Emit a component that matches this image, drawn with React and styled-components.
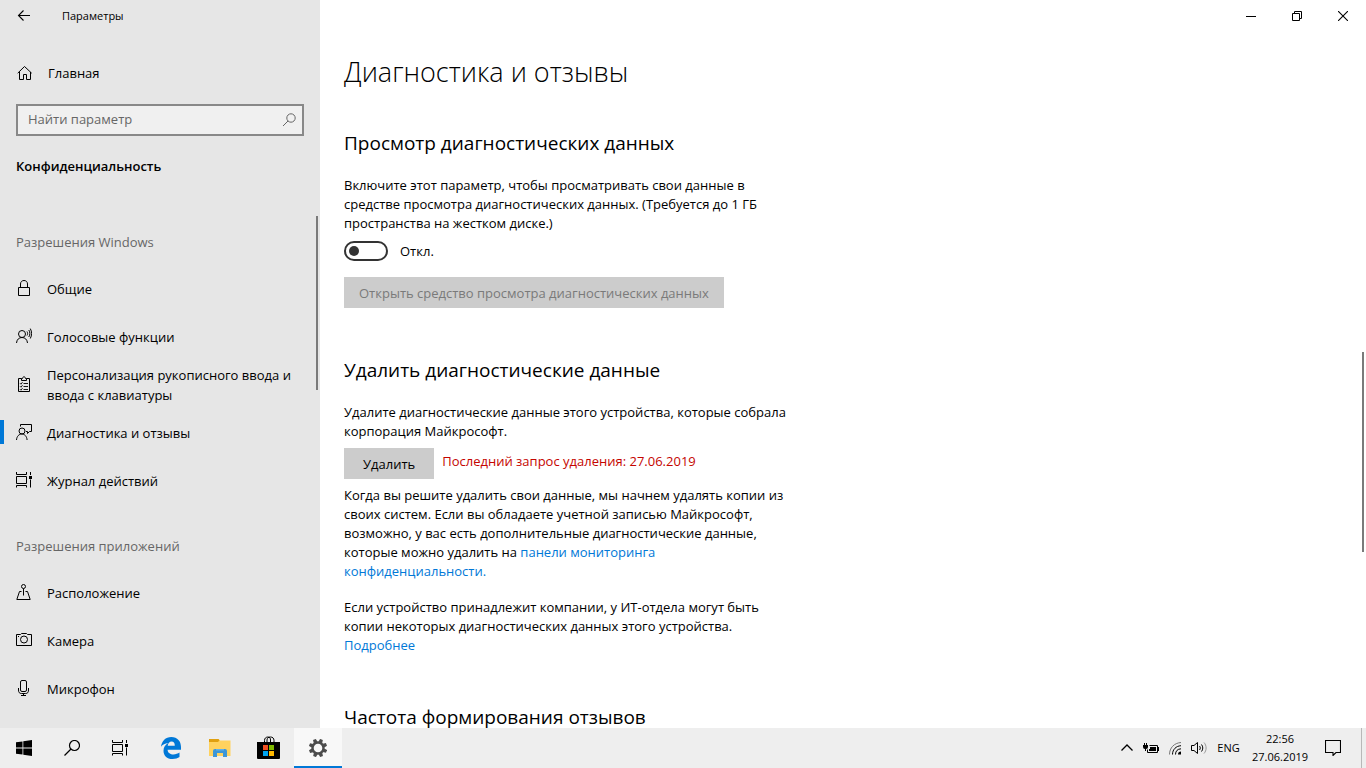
import React, { useState } from "react";
import styled, { createGlobalStyle } from "styled-components";

const GlobalStyle = createGlobalStyle`
  * {
    box-sizing: border-box;
  }
  body {
    margin: 0;
    background: #fff;
    color: #000;
    font-family: "Open Sans", "Noto Sans", sans-serif;
    font-size: 13px;
    line-height: 20px;
  }
  button, input {
    font: inherit;
    color: inherit;
  }
  svg {
    display: block;
    flex: none;
  }
`;

const Desktop = styled.div`
  display: flex;
  flex-direction: column;
  height: 100vh;
  overflow: hidden;
`;

const Window = styled.div`
  display: flex;
  flex: 1;
  min-height: 0;
`;

/* sidebar */

const Sidebar = styled.aside`
  position: relative;
  display: flex;
  flex-direction: column;
  flex: none;
  width: 320px;
  background: #e6e6e6;
  overflow: hidden;
`;

const TitleBar = styled.header`
  display: flex;
  align-items: center;
  flex: none;
  height: 32px;
  font-size: 11px;
`;

const BackButton = styled.button`
  display: flex;
  align-items: center;
  justify-content: center;
  width: 48px;
  height: 32px;
  margin-right: 14px;
  padding: 0;
  border: 0;
  background: none;
`;

const HomeLink = styled.a`
  display: flex;
  align-items: center;
  flex: none;
  gap: 16px;
  height: 48px;
  margin-top: 17px;
  padding: 0 16px;
  color: inherit;
  text-decoration: none;
`;

const SearchBox = styled.label`
  display: flex;
  align-items: center;
  flex: none;
  height: 32px;
  margin: 7px 16px 0;
  padding: 0 5px 0 10px;
  border: 2px solid #888;
  background: #f0f0f0;
  color: #666;
`;

const SearchInput = styled.input`
  flex: 1;
  min-width: 0;
  padding: 0 0 2px;
  border: 0;
  outline: 0;
  background: none;
  &::placeholder {
    color: #666;
    opacity: 1;
  }
`;

const Category = styled.h2`
  flex: none;
  margin: 20px 16px 0;
  font-size: 13px;
  font-weight: 600;
  line-height: 20px;
`;

const Nav = styled.nav`
  flex: 1;
  min-height: 0;
  margin-top: 25px;
  overflow: hidden;
`;

const GroupTitle = styled.h3`
  height: 64px;
  margin: 0;
  padding: 31px 16px 0;
  color: #666;
  font-size: 13px;
  font-weight: 400;
`;

const NavItem = styled.a`
  display: flex;
  align-items: center;
  gap: 15px;
  height: 48px;
  padding-right: 8px;
  color: inherit;
  text-decoration: none;
  &::before {
    content: "";
    flex: none;
    width: 4px;
    height: 24px;
    margin: 0 -3px 2px 0;
    background: ${(props) => (props.$active ? "#0078d7" : "transparent")};
  }
  svg {
    margin-bottom: 2px;
  }
`;

const ScrollThumb = styled.div`
  position: absolute;
  top: ${(props) => props.$top}px;
  right: 2px;
  width: 2px;
  height: ${(props) => props.$size}px;
  background: #7a7a7a;
`;

/* content */

const Content = styled.main`
  position: relative;
  flex: 1;
  min-width: 0;
  overflow: hidden;
`;

const WindowControls = styled.div`
  display: flex;
  justify-content: flex-end;
`;

const ControlButton = styled.button`
  display: flex;
  align-items: center;
  justify-content: center;
  width: 46px;
  height: 32px;
  padding: 0;
  border: 0;
  background: none;
`;

const Page = styled.div`
  max-width: 500px;
  padding: 20px 24px 0;
`;

const PageTitle = styled.h1`
  margin: 0;
  font-size: 27px;
  font-weight: 300;
  line-height: 40px;
  white-space: nowrap;
`;

const Section = styled.section`
  margin-top: ${(props) => props.$gap}px;
`;

const SectionTitle = styled.h2`
  margin: 0 0 19px;
  font-size: 19px;
  font-weight: 400;
  line-height: 28px;
  white-space: nowrap;
`;

const Text = styled.p`
  margin: 0 0 ${(props) => props.$after || 0}px;
  line-height: 19px;
`;

const TextLink = styled.a`
  color: #0078d7;
  text-decoration: none;
`;

const ToggleRow = styled.label`
  display: flex;
  align-items: center;
  gap: 12px;
  width: max-content;
`;

const Toggle = styled.input`
  appearance: none;
  display: flex;
  align-items: center;
  width: 44px;
  height: 20px;
  margin: 0;
  padding: 0 3px;
  border: 2px solid #333;
  border-radius: 10px;
  &::before {
    content: "";
    width: 10px;
    height: 10px;
    border-radius: 5px;
    background: #333;
  }
  &:checked {
    justify-content: flex-end;
    border-color: #0078d7;
    background: #0078d7;
  }
  &:checked::before {
    background: #fff;
  }
`;

const Button = styled.button`
  height: 31px;
  padding: 0 ${(props) => props.$pad || 15}px;
  border: 0;
  background: #ccc;
  white-space: nowrap;
  &:disabled {
    color: #7a7a7a;
  }
`;

const ViewerButton = styled(Button)`
  margin-top: 16px;
`;

const ActionRow = styled.div`
  display: flex;
  gap: 8px;
  margin-bottom: 7px;
`;

const Warning = styled.span`
  padding-top: 3px;
  color: #c50500;
  white-space: nowrap;
`;

/* taskbar */

const Taskbar = styled.footer`
  display: flex;
  align-items: stretch;
  flex: none;
  height: 40px;
  background: #eee;
`;

const TaskButton = styled.button`
  display: flex;
  align-items: center;
  justify-content: center;
  width: 48px;
  padding: 0;
  border: 0;
  background: ${(props) => (props.$active ? "#f8f8f8" : "none")};
  box-shadow: ${(props) => (props.$active ? "inset 0 -2px #0078d7" : "none")};
`;

const PinnedApps = styled.div`
  display: flex;
  gap: 1px;
  margin-left: 3px;
`;

const Tray = styled.div`
  display: flex;
  align-items: stretch;
  margin-left: auto;
  font-size: 11px;
`;

const TrayButton = styled.button`
  display: flex;
  align-items: center;
  justify-content: center;
  width: ${(props) => props.$width || 24}px;
  padding: 0;
  border: 0;
  background: none;
`;

const Clock = styled.button`
  width: 68px;
  padding: 0;
  border: 0;
  background: none;
  line-height: 18px;
  text-align: center;
`;

const ShowDesktop = styled.button`
  width: 5px;
  margin-left: 9px;
  padding: 0;
  border: 0;
  border-left: 1px solid #b8b8b8;
  background: none;
`;

/* icons */

const Icon = ({ size = 16, width, height, children }) => (
  <svg
    width={width || size}
    height={height || size}
    viewBox={`0 0 ${width || size} ${height || size}`}
    fill="none"
    stroke="currentColor"
    aria-hidden="true"
  >
    {children}
  </svg>
);

const BackIcon = () => (
  <Icon>
    <path d="M2.5 7.5H14M7.5 2.5L2.5 7.5L7.5 12.5" strokeWidth="1.1" />
  </Icon>
);

const HomeIcon = () => (
  <Icon>
    <path d="M1.7 8.2L8.5 1.500L15.700 8.200M3.500 7V14.500H7.500V9.500H10.500V14.500H14.500V7" />
  </Icon>
);

const SearchIcon = () => (
  <Icon>
    <circle cx="10" cy="6" r="4.2" />
    <path d="M7 9L2 14" />
  </Icon>
);

const LockIcon = () => (
  <Icon>
    <path d="M2.5 7.5H13.5V15.5H2.5ZM4.5 7.5V4C4.5 1.8 6 .5 8 .5S11.500 1.800 11.500 4V7.500" />
  </Icon>
);

const SpeechIcon = () => (
  <Icon>
    <circle cx="6" cy="6" r="3.500" />
    <path d="M.5 15C.8 11.500 3 9.500 6 9.500S11.200 11.500 11.500 15M11 3.500C11.800 4.800 11.800 6.200 11 7.500M12.800 2C14.200 4.200 14.200 6.800 12.800 9M14.300 .6C16 3.700 16 7.300 14.300 10.500" />
  </Icon>
);

const ClipboardIcon = () => (
  <Icon>
    <path d="M5.500 2.500H2.500V15.500H13.500V2.500H10.500M5.500 4.500V2.500H6.500C6.800.2 9.200.2 9.500 2.500H10.500V4.500Z" />
    <path d="M7.500 7.500H12M7.500 10.500H12M7.500 13.500H12M4 7.200L5 8.200L6.500 6.200M4 10.200L5 11.200L6.500 9.200M4 13.200L5 14.200L6.500 12.200" strokeWidth=".9" />
  </Icon>
);

const FeedbackIcon = () => (
  <Icon>
    <circle cx="6" cy="7" r="3" />
    <path d="M.5 16C.8 12.300 3 10 5.800 10S10.800 12.300 11.100 16M4.500 2.500V.5H15.500V7.500H13.500L11.500 9.500V7.500H10" />
  </Icon>
);

const TimelineIcon = () => (
  <Icon>
    <path d="M.5 0V2.500H10.500V0M.5 4.500H10.500V11.500H.5ZM.5 15.500V13.500H10.500V15.500M14.500 0V3M14.500 7.500V15.500" />
    <path d="M13 4H16V7H13Z" fill="currentColor" stroke="none" />
  </Icon>
);

const LocationIcon = () => (
  <Icon>
    <circle cx="7.500" cy="2.500" r="2" />
    <path d="M7.500 4.500V11.500M5.500 7.500H3.500L.8 15.500H14.200L11.500 7.500H9.500" />
  </Icon>
);

const CameraIcon = () => (
  <Icon>
    <path d="M.5 2.500H4.500L5.500 1.500H10.500L11.500 2.500H15.500V13.500H.5Z" />
    <circle cx="8" cy="7.500" r="3.500" />
    <path d="M2 4.500H3" />
  </Icon>
);

const MicIcon = () => (
  <Icon>
    <rect x="4.500" y=".5" width="6" height="11" rx="1.500" />
    <path d="M2.500 8V10C2.500 12.500 3.500 13.500 5.500 13.500H9.500C11.500 13.500 12.500 12.500 12.500 10V8M7.500 13.500V15.500M5 15.500H10" />
  </Icon>
);

const StartIcon = () => (
  <Icon>
    <path d="M0 2.300L6.500 1.400V7.500H0ZM7.300 1.300L16 0V7.500H7.300ZM0 8.500H6.500V14.600L0 13.700ZM7.300 8.500H16V16L7.300 14.700Z" fill="#000" stroke="none" />
  </Icon>
);

const TaskSearchIcon = () => (
  <Icon>
    <circle cx="10.500" cy="5.500" r="5" strokeWidth="1.200" />
    <path d="M7 9L.5 15.500" strokeWidth="1.300" />
  </Icon>
);

const EdgeIcon = () => (
  <Icon width={20} height={22}>
    <path
      d="M0 9.800C.6 4.200 4.600 0 10.300 0C16.500 0 20 4.400 20 10V12.700H6.600C6.800 16 9.400 17.400 12.400 17.400C14.800 17.400 16.900 16.700 18.500 15.600V20C16.800 21.200 14.400 22 11.600 22C5.800 22 2.500 18.600 2.500 13.700C2.500 10.300 4.200 7.600 7.200 6C4 6.400 1.600 7.700 0 9.800ZM6.700 8.700H13.800C13.800 6 12.600 4.600 10.600 4.600C8.500 4.600 7.100 6.300 6.700 8.700Z"
      fill="#0078d7"
      stroke="none"
    />
  </Icon>
);

const FolderIcon = () => (
  <Icon width={22} height={18}>
    <g stroke="none">
      <path d="M0 0H9.500L11 1.500H21.500V17H0Z" fill="#ffd25e" />
      <path d="M0 0H9.500L10.500 1.200L9 3H0Z" fill="#e0a010" />
      <path d="M4 18V12Q4 10 6 10H16Q18 10 18 12V18H14V14H8V18Z" fill="#3c96d8" />
      <path d="M7 10H15V11.500H7Z" fill="#5fb0ea" />
    </g>
  </Icon>
);

const StoreIcon = () => (
  <Icon size={24}>
    <path d="M7.500 7V4.500C7.500 2.200 9 1 11 1S13.500 2.500 13.500 4V7M10 7V4C10 2 11.500 1 13.500 1S17 2.200 17 4.500V7" stroke="#000" />
    <g stroke="none">
      <path d="M0 6H23V22Q23 23 22 23H1Q0 23 0 22Z" fill="#000" />
      <path d="M6 9H11V14H6Z" fill="#f25022" />
      <path d="M12 9H17V14H12Z" fill="#7fba00" />
      <path d="M6 15H11V20H6Z" fill="#00a4ef" />
      <path d="M12 15H17V20H12Z" fill="#ffb900" />
    </g>
  </Icon>
);

const GearIcon = () => (
  <Icon size={18}>
    <circle cx="9" cy="9" r="5.500" stroke="#4c4c4c" strokeWidth="2.400" />
    {[22, 67, 112, 157, 202, 247, 292, 337].map((angle) => (
      <path key={angle} d="M7 3L7.500 -.2H10.500L11 3Z" fill="#4c4c4c" stroke="none" transform={`rotate(${angle} 9 9)`} />
    ))}
  </Icon>
);

const ChevronIcon = () => (
  <Icon>
    <path d="M2.500 10.500L8 5L13.500 10.500" strokeWidth="1.300" />
  </Icon>
);

const BatteryIcon = () => (
  <Icon>
    <path d="M6.500 5.500H14.500V12.500H4.500V9.500" />
    <path d="M15 7H16V11H15ZM7 7H13V11H6V9H7ZM0 5H5V7Q5 9 3 9V11H2V9Q0 9 0 7ZM1 3H2V5H1ZM3 3H4V5H3Z" fill="currentColor" stroke="none" />
  </Icon>
);

const WifiIcon = () => (
  <Icon>
    <path d="M2.500 14.500C2.500 8 7 3 14 2.500" stroke="#777" />
    <path d="M5.500 14.500C5.500 9.500 9 6 14 5.700M8.500 14.500C8.500 11 10.500 9 14 8.800" />
    <path d="M11 14.500C11 12.800 12 11.700 14 11.600V14.500Z" fill="currentColor" stroke="none" />
  </Icon>
);

const VolumeIcon = () => (
  <Icon>
    <path d="M.5 5.500H3L6.500 2.500V13.500L3 10.500H.5ZM8.500 6C9.500 7.200 9.500 8.800 8.500 10M10.500 4.500C12.200 6.500 12.200 9.500 10.500 11.500" />
    <path d="M13 2.500C15.800 5.500 15.800 10.500 13 13.500" stroke="#999" />
  </Icon>
);

const ActionCenterIcon = () => (
  <Icon>
    <path d="M.5 .5H15.500V12.500H11L8 15.500V12.500H.5Z" strokeWidth="1.100" />
  </Icon>
);

const MinimizeIcon = () => (
  <Icon size={10}>
    <path d="M0 5.500H10" />
  </Icon>
);

const RestoreIcon = () => (
  <Icon size={10}>
    <path d="M.5 2.500H7.500V9.500H.5ZM2.500 2.500V.5H9.500V7.500H7.500" />
  </Icon>
);

const CloseIcon = () => (
  <Icon size={10}>
    <path d="M0 0L10 10M10 0L0 10" strokeWidth="1.100" />
  </Icon>
);

const groups = [
  {
    title: "Разрешения Windows",
    items: [
      { label: "Общие", icon: LockIcon },
      { label: "Голосовые функции", icon: SpeechIcon },
      { label: "Персонализация рукописного ввода и ввода с клавиатуры", icon: ClipboardIcon },
      { label: "Диагностика и отзывы", icon: FeedbackIcon, active: true },
      { label: "Журнал действий", icon: TimelineIcon },
    ],
  },
  {
    title: "Разрешения приложений",
    items: [
      { label: "Расположение", icon: LocationIcon },
      { label: "Камера", icon: CameraIcon },
      { label: "Микрофон", icon: MicIcon },
    ],
  },
];

const apps = [
  { name: "Microsoft Edge", icon: EdgeIcon },
  { name: "Проводник", icon: FolderIcon },
  { name: "Microsoft Store", icon: StoreIcon },
  { name: "Параметры", icon: GearIcon, active: true },
];

const SettingsSidebar = () => (
  <Sidebar>
    <TitleBar>
      <BackButton aria-label="Назад">
        <BackIcon />
      </BackButton>
      Параметры
    </TitleBar>
    <HomeLink href="#home">
      <HomeIcon />
      Главная
    </HomeLink>
    <SearchBox>
      <SearchInput type="text" placeholder="Найти параметр" aria-label="Найти параметр" />
      <SearchIcon />
    </SearchBox>
    <Category>Конфиденциальность</Category>
    <Nav>
      {groups.map((group) => (
        <div key={group.title}>
          <GroupTitle>{group.title}</GroupTitle>
          {group.items.map(({ label, icon: ItemIcon, active }) => (
            <NavItem key={label} href="#section" $active={active}>
              <ItemIcon />
              <span>{label}</span>
            </NavItem>
          ))}
        </div>
      ))}
    </Nav>
    <ScrollThumb $top={216} $size={174} />
  </Sidebar>
);

const DiagnosticsPage = () => {
  const [viewer, setViewer] = useState(false);
  return (
    <Page>
      <PageTitle>Диагностика и отзывы</PageTitle>
      <Section $gap={37}>
        <SectionTitle>Просмотр диагностических данных</SectionTitle>
        <Text $after={8}>
          Включите этот параметр, чтобы просматривать свои данные в средстве просмотра
          диагностических данных. (Требуется до 1 ГБ пространства на жестком диске.)
        </Text>
        <ToggleRow>
          <Toggle type="checkbox" role="switch" checked={viewer} onChange={() => setViewer(!viewer)} />
          {viewer ? "Вкл." : "Откл."}
        </ToggleRow>
        <ViewerButton disabled={!viewer}>Открыть средство просмотра диагностических данных</ViewerButton>
      </Section>
      <Section $gap={48}>
        <SectionTitle>Удалить диагностические данные</SectionTitle>
        <Text $after={7}>
          Удалите диагностические данные этого устройства, которые собрала корпорация Майкрософт.
        </Text>
        <ActionRow>
          <Button $pad={19}>Удалить</Button>
          <Warning>Последний запрос удаления: 27.06.2019</Warning>
        </ActionRow>
        <Text $after={17}>
          Когда вы решите удалить свои данные, мы начнем удалять копии из своих систем. Если вы
          обладаете учетной записью Майкрософт, возможно, у вас есть дополнительные диагностические
          данные, которые можно удалить на{" "}
          <TextLink href="#dashboard">панели мониторинга конфиденциальности.</TextLink>
        </Text>
        <Text>
          Если устройство принадлежит компании, у ИТ-отдела могут быть копии некоторых
          диагностических данных этого устройства. <TextLink href="#more">Подробнее</TextLink>
        </Text>
      </Section>
      <Section $gap={48}>
        <SectionTitle>Частота формирования отзывов</SectionTitle>
      </Section>
    </Page>
  );
};

const SystemTaskbar = () => (
  <Taskbar>
    <TaskButton aria-label="Пуск">
      <StartIcon />
    </TaskButton>
    <TaskButton aria-label="Поиск">
      <TaskSearchIcon />
    </TaskButton>
    <TaskButton aria-label="Представление задач">
      <TimelineIcon />
    </TaskButton>
    <PinnedApps>
      {apps.map(({ name, icon: AppIcon, active }) => (
        <TaskButton key={name} aria-label={name} $active={active}>
          <AppIcon />
        </TaskButton>
      ))}
    </PinnedApps>
    <Tray>
      <TrayButton aria-label="Скрытые значки">
        <ChevronIcon />
      </TrayButton>
      <TrayButton aria-label="Батарея">
        <BatteryIcon />
      </TrayButton>
      <TrayButton aria-label="Сеть">
        <WifiIcon />
      </TrayButton>
      <TrayButton aria-label="Громкость">
        <VolumeIcon />
      </TrayButton>
      <TrayButton $width={35}>ENG</TrayButton>
      <Clock>
        22:56
        <br />
        27.06.2019
      </Clock>
      <TrayButton $width={38} aria-label="Центр уведомлений">
        <ActionCenterIcon />
      </TrayButton>
      <ShowDesktop aria-label="Свернуть все окна" />
    </Tray>
  </Taskbar>
);

const App = () => (
  <Desktop>
    <GlobalStyle />
    <Window>
      <SettingsSidebar />
      <Content>
        <WindowControls>
          <ControlButton aria-label="Свернуть">
            <MinimizeIcon />
          </ControlButton>
          <ControlButton aria-label="Развернуть">
            <RestoreIcon />
          </ControlButton>
          <ControlButton aria-label="Закрыть">
            <CloseIcon />
          </ControlButton>
        </WindowControls>
        <DiagnosticsPage />
        <ScrollThumb $top={352} $size={200} />
      </Content>
    </Window>
    <SystemTaskbar />
  </Desktop>
);

export default App;
